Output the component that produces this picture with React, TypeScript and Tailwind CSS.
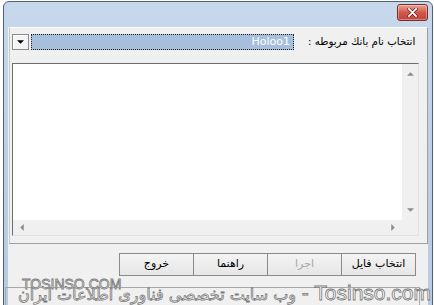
import React from "react";

const ui = "font-['DejaVu_Sans',sans-serif]";

function Tri({ dir, cls }: { dir: "up" | "down" | "left" | "right"; cls: string }) {
  const pts = {
    up: "0,4 4,0 8,4",
    down: "0,0 8,0 4,4",
    left: "4,0 4,8 0,4",
    right: "0,0 4,4 0,8",
  }[dir];
  const vb = dir === "up" || dir === "down" ? "0 0 8 4" : "0 0 4 8";
  const size = dir === "up" || dir === "down" ? "w-[7px] h-[4px]" : "w-[4px] h-[7px]";
  return (
    <svg viewBox={vb} className={`${size} ${cls}`}>
      <polygon points={pts} />
    </svg>
  );
}

function Button({ label, disabled }: { label: string; disabled?: boolean }) {
  return (
    <div
      className={`-ml-px flex h-[23px] w-[75px] items-center justify-center border border-[#8a8a8a] bg-gradient-to-b from-[#f4f4f4] to-[#e6e6e6] text-[11px] ${
        disabled ? "text-[#a8a8a8]" : "text-black"
      }`}
      dir="rtl"
    >
      {label}
    </div>
  );
}

export default function App() {
  return (
    <div className={`relative h-[305px] w-[434px] overflow-hidden bg-white pl-[3px] pt-[1px] ${ui}`}>
      <div className="flex h-[312px] w-[430px] flex-col rounded-t-[6px] border border-[#4e6179] bg-gradient-to-b from-[#c8d8ec] via-[#bccfe7] to-[#b7cbe4] px-[4px]">
        {/* title bar */}
        <div className="flex h-[25px] items-start justify-end pt-[2px]">
          <div className="flex h-[17px] w-[31px] items-center justify-center rounded-[3px] border border-[#7d2a22] bg-gradient-to-b from-[#e8a397] via-[#d0584b] to-[#c2423a] shadow-[inset_0_0_0_1px_rgba(255,255,255,0.35)]">
            <svg viewBox="0 0 12 10" className="h-[9px] w-[11px]">
              <path d="M2 1 L10 9 M10 1 L2 9" stroke="#5a1d18" strokeWidth="3.4" strokeLinecap="round" />
              <path d="M2 1 L10 9 M10 1 L2 9" stroke="#ffffff" strokeWidth="2" strokeLinecap="round" />
            </svg>
          </div>
        </div>

        {/* client area */}
        <div className="flex flex-1 flex-col bg-[#f0f0f0]">
          {/* panel */}
          <div className="ml-px flex h-[217px] flex-col border border-b-[#a0a0a0] border-l-[#c8c8c8] border-r-[#a0a0a0] border-t-white pl-[2px] pr-[7px] pt-[6px]">
            <div className="flex h-[16px] items-center">
              <div className="flex h-[16px] w-[17px] shrink-0 items-center justify-center border border-[#8a8a8a] bg-[#f4f4f4] shadow-[inset_1px_1px_0_#ffffff]">
                <Tri dir="down" cls="fill-black" />
              </div>
              <div className="ml-[2px] flex h-[16px] w-[263px] shrink-0 items-center justify-end border border-dotted border-[#222] bg-[#a7bfdc] pr-[3px] text-[11px] text-white">
                Holoo1
              </div>
              <div className="flex min-w-0 flex-1 justify-end pr-[5px]">
                <span dir="rtl" className="inline-block origin-right scale-x-[0.93] whitespace-nowrap text-[11px] text-black">
                  انتخاب نام بانك مربوطه :
                </span>
              </div>
            </div>

            {/* listbox */}
            <div className="mt-[13px] flex h-[173px] w-[407px] flex-col border border-b-[#e3e3e3] border-l-[#6d6d6d] border-r-[#e3e3e3] border-t-[#6d6d6d] bg-white">
              <div className="flex flex-1">
                <div className="flex-1 bg-white" />
                <div className="flex w-[16px] flex-col items-center justify-between bg-[#f0f0f0] py-[8px]">
                  <Tri dir="up" cls="fill-[#8c8c8c]" />
                  <Tri dir="down" cls="fill-[#8c8c8c]" />
                </div>
              </div>
              <div className="flex h-[15px]">
                <div className="flex flex-1 items-center justify-between bg-[#f0f0f0] px-[7px]">
                  <Tri dir="left" cls="fill-[#8c8c8c]" />
                  <Tri dir="right" cls="fill-[#8c8c8c]" />
                </div>
                <div className="w-[16px] bg-[#f0f0f0]" />
              </div>
            </div>
          </div>

          {/* buttons */}
          <div className="mt-[9px] flex justify-end pr-[12px]">
            <Button label="خروج" />
            <Button label="راهنما" />
            <Button label="اجرا" disabled />
            <Button label="انتخاب فایل" />
          </div>
        </div>
      </div>

      {/* watermark overlay */}
      <div className="pointer-events-none absolute left-[5px] top-[287px] h-[30px] w-[415px] border border-[#a8a8a8]" />
      <div className="pointer-events-none absolute left-[22px] top-[277px] font-['Liberation_Sans',sans-serif] text-[14px] leading-none text-white/90 [-webkit-text-stroke:0.8px_#7a7a7a]">
        TOSINSO.COM
      </div>
      <div
        className="pointer-events-none absolute left-[18px] top-[282px] flex items-baseline whitespace-nowrap leading-none text-white/90 [-webkit-text-stroke:0.8px_#7a7a7a]"
        dir="ltr"
      >
        <span className="font-['DejaVu_Sans',sans-serif] text-[16px]" dir="rtl">
          وب سایت تخصصی فناوری اطلاعات ایران
        </span>
        <span className="font-['Liberation_Sans',sans-serif] text-[21px]">&nbsp;- Tosinso.com</span>
      </div>
    </div>
  );
}
